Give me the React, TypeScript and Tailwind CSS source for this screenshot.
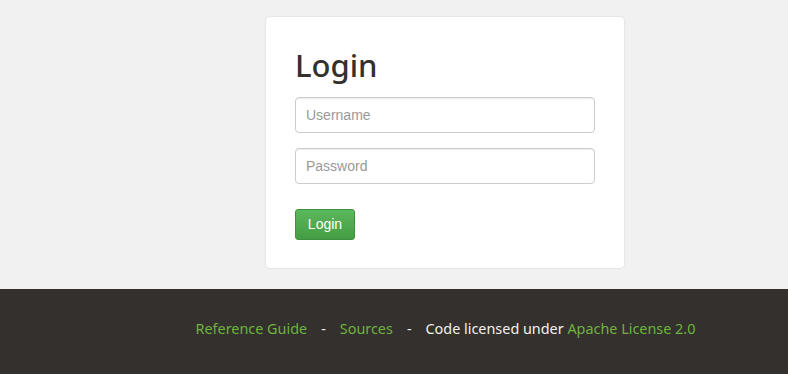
import React, { useState } from 'react';

const App: React.FC = () => {
  const [username, setUsername] = useState('');
  const [password, setPassword] = useState('');

  return (
    <div className="min-h-[374px] flex flex-col bg-[#f1f1f1]">
      <div className="pt-[17px] pb-[21px] pl-[266px]">
        <div className="w-[358px] bg-white rounded-[4px] shadow-[0_0_2px_rgba(0,0,0,0.15)] px-[29px] pt-[28px] pb-[28px]">
          <h1
            className="text-[31px] leading-[40px] text-[#34302d] font-medium mb-[12px]"
            style={{ fontFamily: '"Noto Sans", sans-serif' }}
          >
            Login
          </h1>
          <form
            onSubmit={(e) => e.preventDefault()}
            className="flex flex-col"
            style={{ fontFamily: '"Liberation Sans", Arial, sans-serif' }}
          >
            <input
              type="text"
              placeholder="Username"
              value={username}
              onChange={(e) => setUsername(e.target.value)}
              className="w-[300px] h-[36px] px-[10px] text-[14px] text-[#555] border border-[#ccc] rounded-[4px] placeholder:text-[#999] shadow-[inset_0_1px_1px_rgba(0,0,0,0.075)] focus:outline-none"
            />
            <input
              type="password"
              placeholder="Password"
              value={password}
              onChange={(e) => setPassword(e.target.value)}
              className="mt-[15px] w-[300px] h-[36px] px-[10px] text-[14px] text-[#555] border border-[#ccc] rounded-[4px] placeholder:text-[#999] shadow-[inset_0_1px_1px_rgba(0,0,0,0.075)] focus:outline-none"
            />
            <div className="mt-[25px]">
              <button
                type="submit"
                className="w-[60px] h-[31px] text-[14px] text-white rounded-[3px] border border-[#3e8f3e] bg-gradient-to-b from-[#5cb85c] to-[#449d44]"
              >
                Login
              </button>
            </div>
          </form>
        </div>
      </div>
      <footer
        className="flex-1 bg-[#34302d] flex justify-center items-start pt-[29px] pl-[103px] text-[14.4px] text-[#f1f1f1]"
        style={{ fontFamily: '"Noto Sans", sans-serif' }}
      >
        <a href="#" className="text-[#6db33f]">Reference Guide</a>
        <span className="mx-[14px]">-</span>
        <a href="#" className="text-[#6db33f]">Sources</a>
        <span className="mx-[14px]">-</span>
        <span>
          Code licensed under <a href="#" className="text-[#6db33f]">Apache License 2.0</a>
        </span>
      </footer>
    </div>
  );
};

export default App;
